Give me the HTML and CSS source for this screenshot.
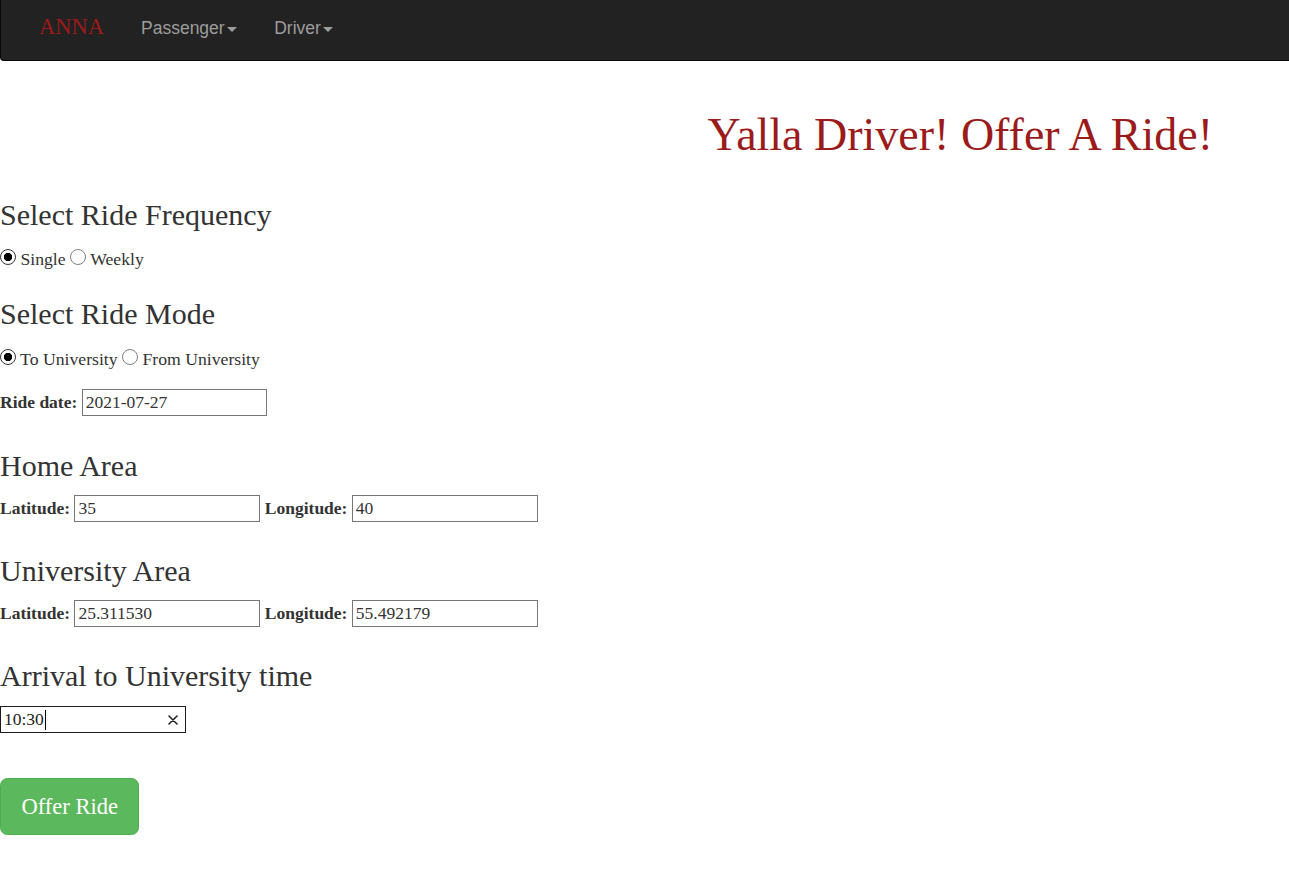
FILE: index.html
```html
<!DOCTYPE html>
<html lang="en">
<head>
<meta charset="utf-8">
<title>Yalla Driver! Offer A Ride!</title>
<link rel="stylesheet" href="styles.css">
</head>
<body>
<nav class="navbar">
  <a class="brand" href="#">ANNA</a>
  <ul class="nav">
    <li><a class="nav-link" href="#">Passenger<span class="caret"></span></a></li>
    <li><a class="nav-link" href="#">Driver<span class="caret"></span></a></li>
  </ul>
</nav>
<main class="page">
  <h1 class="title">Yalla Driver! Offer A Ride!</h1>
  <form class="form">
    <h3 class="section first">Select Ride Frequency</h3>
    <div class="radios"><input class="radio" type="radio" name="freq" checked> Single <input class="radio" type="radio" name="freq"> Weekly</div>

    <h3 class="section after-radio">Select Ride Mode</h3>
    <div class="radios"><input class="radio" type="radio" name="mode" checked> To University <input class="radio" type="radio" name="mode"> From University</div>

    <div class="field-row date-row">
      <label class="field-label">Ride date:</label>
      <input class="text-input date-input" type="text" value="2021-07-27">
    </div>

    <h3 class="section">Home Area</h3>
    <div class="field-row">
      <label class="field-label">Latitude:</label>
      <input class="text-input" type="text" value="35">
      <label class="field-label">Longitude:</label>
      <input class="text-input" type="text" value="40">
    </div>

    <h3 class="section">University Area</h3>
    <div class="field-row">
      <label class="field-label">Latitude:</label>
      <input class="text-input" type="text" value="25.311530">
      <label class="field-label">Longitude:</label>
      <input class="text-input" type="text" value="55.492179">
    </div>

    <h3 class="section">Arrival to University time</h3>
    <div class="time-field">
      <span class="time-value">10:30</span><span class="text-cursor"></span>
      <span class="spacer"></span>
      <svg class="clear-icon" width="10" height="10" viewBox="0 0 10 10" aria-hidden="true">
        <path d="M1 1 L9 9 M9 1 L1 9" stroke="#222" stroke-width="1.6" stroke-linecap="round"/>
      </svg>
    </div>

    <button class="btn-offer" type="button">Offer Ride</button>
  </form>
</main>
</body>
</html>
```
FILE: styles.css
```css
* {
  box-sizing: border-box;
}

body {
  margin: 0;
  font-family: "Liberation Serif", "Times New Roman", serif;
  font-size: 17.5px;
  line-height: 25px;
  color: #333;
  background: #fff;
}

/* Navbar */
.navbar {
  display: flex;
  align-items: flex-start;
  height: 61px;
  padding-left: 19px;
  background: #222;
  border-left: 1px solid #080808;
  border-bottom: 1px solid #080808;
  border-radius: 0 0 0 4px;
}

.brand {
  display: block;
  padding: 14px 18.5px 0 19px;
  font-family: "Liberation Serif", "Times New Roman", serif;
  font-size: 22.5px;
  line-height: 25px;
  color: #9b1b1b;
  text-decoration: none;
}

.nav {
  display: flex;
  margin: 0;
  padding: 0;
  list-style: none;
}

.nav-link {
  display: block;
  padding: 16px 18.5px 0;
  font-family: "Liberation Sans", Arial, sans-serif;
  font-size: 17.5px;
  line-height: 25px;
  color: #9d9d9d;
  text-decoration: none;
}

.caret {
  display: inline-block;
  width: 0;
  height: 0;
  margin-left: 2.5px;
  vertical-align: middle;
  border-top: 5px solid #9d9d9d;
  border-left: 5px solid transparent;
  border-right: 5px solid transparent;
}

/* Page */
.page {
  display: flex;
  flex-direction: column;
}

.title {
  margin: 49px 0 0;
  padding-right: 76px;
  font-size: 46px;
  line-height: 49.5px;
  font-weight: normal;
  color: #9b1b1b;
  text-align: right;
}

.form {
  display: flex;
  flex-direction: column;
  align-items: flex-start;
  margin: 0;
}

.section {
  margin: 32.4px 0 13px;
  font-size: 30px;
  line-height: 33px;
  font-weight: normal;
  color: #333;
}

.section.first {
  margin-top: 38.2px;
}

.section.after-radio {
  margin-top: 25px;
}

.radios {
  margin-top: 3.6px;
  font-size: 17.7px;
  line-height: 25px;
}

.radio {
  appearance: none;
  -webkit-appearance: none;
  width: 16px;
  height: 16px;
  margin: 0;
  border: 1px solid #808080;
  border-radius: 50%;
  background: #fff;
  vertical-align: baseline;
}

.radio:checked {
  border-color: #333;
  background: radial-gradient(circle, #000 0 3.8px, #fff 4.5px);
}

.field-row {
  display: flex;
  align-items: baseline;
  gap: 4.4px;
}

.date-row {
  margin-top: 17.3px;
}

.field-label {
  font-weight: bold;
  line-height: 25px;
}

.text-input {
  width: 186px;
  height: 27px;
  margin: 0;
  padding: 0 3px;
  border: 1px solid #767676;
  border-radius: 0;
  font: inherit;
  line-height: 25px;
  color: #333;
  background: #fff;
}

.date-input {
  width: 185px;
}

.time-field {
  display: flex;
  align-items: center;
  width: 186px;
  height: 27px;
  margin-top: 1px;
  padding: 0 7px 0 3px;
  border: 1px solid #1b1b1b;
  background: #fff;
  color: #222;
}

.time-value {
  line-height: 25px;
}

.text-cursor {
  width: 1px;
  height: 20px;
  margin-left: 1px;
  background: #000;
}

.spacer {
  flex: 1;
}

.clear-icon {
  display: block;
}

.btn-offer {
  margin-top: 44.8px;
  padding: 12.5px 20.5px;
  font-family: "Liberation Serif", "Times New Roman", serif;
  font-size: 22.5px;
  line-height: 30px;
  color: #fff;
  background: #5cb85c;
  border: 1px solid #4cae4c;
  border-radius: 7.5px;
  cursor: pointer;
}
```
